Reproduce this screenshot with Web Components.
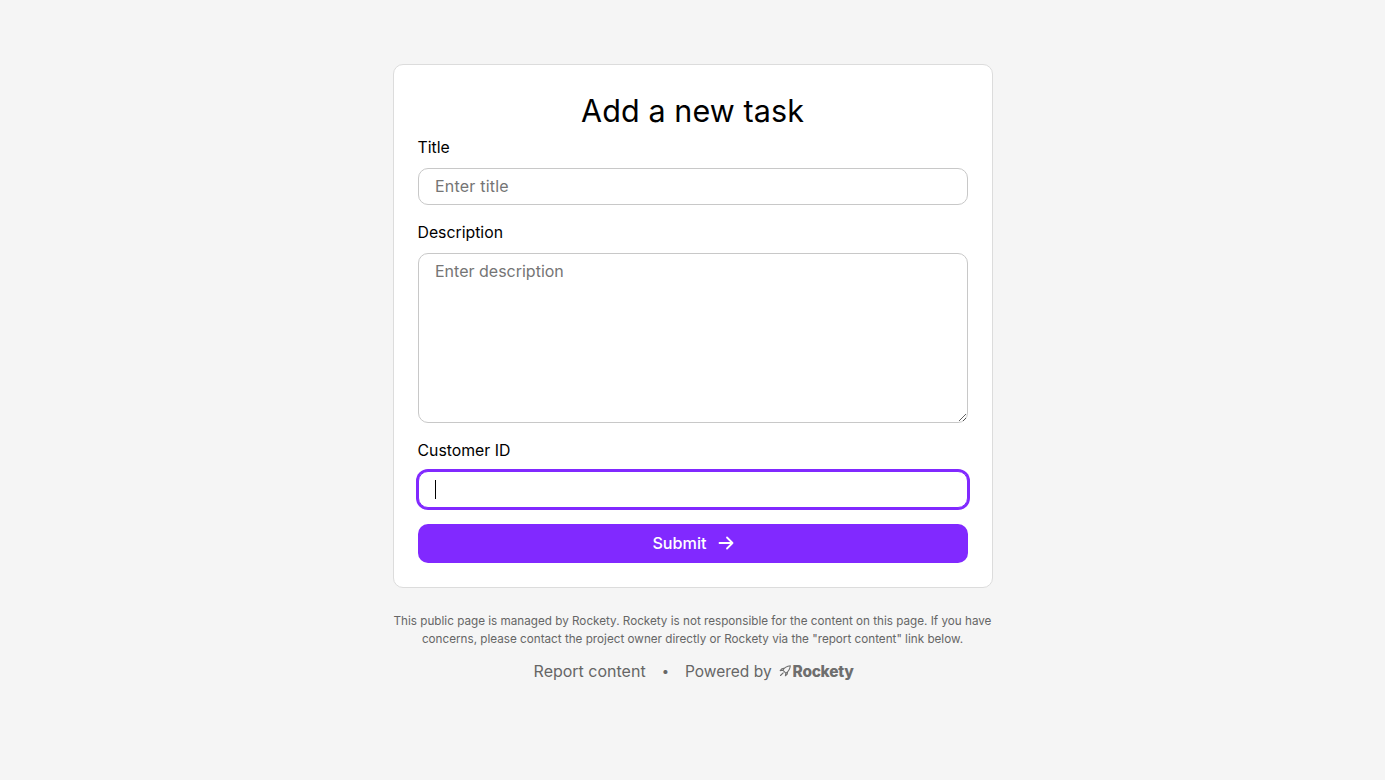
<!DOCTYPE html>
<html><head><meta charset="utf-8"><title>Add a new task</title>
<style>html,body{margin:0;background:#f5f5f5;height:100%}body{font-family:Inter,"Liberation Sans",sans-serif}</style>
</head><body>
<task-page>
<task-card>
<form-field label="Title" placeholder="Enter title"></form-field>
<form-field label="Description" placeholder="Enter description" multiline></form-field>
<form-field label="Customer ID" focused></form-field>
<submit-button>Submit</submit-button>
</task-card>
<page-footer></page-footer>
</task-page>
<script>
const F='Inter,"Liberation Sans",sans-serif';
function def(name,html,init){customElements.define(name,class extends HTMLElement{connectedCallback(){if(this.shadowRoot)return;const r=this.attachShadow({mode:'open'});r.innerHTML=html;init&&init(this,r);}});}
def('task-page',`<style>:host{display:flex;flex-direction:column;align-items:center;padding-top:64px;font-family:${F}}</style><slot></slot>`);
def('task-card',`<style>:host{display:flex;flex-direction:column;box-sizing:border-box;width:600px;height:524px;background:#fff;border:1px solid #dcdcdc;border-radius:10px;padding:24px}
h1{margin:0;font-size:30.5px;font-weight:400;line-height:43px;text-align:center;color:#000;height:47px;letter-spacing:.1px}
.f{display:flex;flex-direction:column;gap:16px}</style><h1>Add a new task</h1><div class="f"><slot></slot></div>`);
def('form-field',`<style>:host{display:block}
label{display:block;font-size:15.8px;line-height:24px;height:22px;margin-bottom:10px;color:#000;margin-top:0}
.w{position:relative;display:block;line-height:0}
input,textarea{display:block;box-sizing:border-box;width:550px;height:37px;border:1px solid #c8c8c8;border-radius:10px;padding:0 16px 2px 16.5px;font:16px ${F};background:#fff;outline:0;margin:0;color:#000}
input::placeholder{letter-spacing:.2px}
textarea{height:170px;padding:5px 16px 5px 16.5px;line-height:24px;resize:vertical}
::placeholder{color:#757575;opacity:1}
input.focus{border-color:#8129ff;box-shadow:0 0 0 2px #8129ff}
.caret{position:absolute;left:17px;top:9px;width:1px;height:19px;background:#000}
</style><label></label><span class="w"></span>`,(h,r)=>{
r.querySelector('label').textContent=h.getAttribute('label');
const w=r.querySelector('.w');const el=document.createElement(h.hasAttribute('multiline')?'textarea':'input');
if(h.getAttribute('placeholder'))el.placeholder=h.getAttribute('placeholder');
el.setAttribute('aria-label',h.getAttribute('label'));w.append(el);
if(h.hasAttribute('focused')){el.className='focus';const c=document.createElement('span');c.className='caret';w.append(c);}
});
def('submit-button',`<style>:host{display:block}
button{display:flex;align-items:center;justify-content:center;gap:12px;width:100%;height:39px;border:0;border-radius:10px;background:#8129ff;color:#fff;font:500 16.2px ${F};padding:0 0 0 1px}
span{display:block;margin-top:-2px}
svg{display:block;margin-top:-1px;margin-left:-1px}</style><button type="button"><span><slot></slot></span><svg width="16" height="16" viewBox="0 0 16 16" fill="none" stroke="#fff" stroke-width="1.8" stroke-linecap="round" stroke-linejoin="round"><path d="M1.5 8h13M9 2.5 14.5 8 9 13.5"/></svg></button>`);
def('page-footer',`<style>:host{display:flex;flex-direction:column;align-items:center;width:600px;margin-top:24px;color:#666}
p{margin:0;font-size:11.7px;line-height:18px;text-align:center;width:600px}
.l{display:flex;align-items:center;height:24px;margin-top:11px;padding-left:2px;font-size:16px;color:#666}
.d{margin:0 16px;font-size:13px}
.p{font-size:15.5px}
.r{display:inline-flex;align-items:center;margin-left:7px;font-weight:800;font-size:15.5px;letter-spacing:-.3px;gap:2px;color:#6e6e6e}
svg{display:block}</style>
<p>This public page is managed by Rockety. Rockety is not responsible for the content on this page. If you have concerns, please contact the project owner directly or Rockety via the "report content" link below.</p>
<div class="l"><span>Report content</span><span class="d">•</span><span class="p">Powered by</span><span class="r"><svg width="12" height="12" viewBox="0 0 12 12" fill="none" stroke="#6e6e6e" stroke-width="1.1" stroke-linejoin="round" stroke-linecap="round"><path d="M11.3.7C8 1 5.5 2.5 3.8 5.2L6.8 8.2C9.5 6.5 11 4 11.3.7ZM3.8 5.2 1.2 5.6 2.8 3.8 5 3.4M6.8 8.2 6.4 10.8 8.2 9.2 8.6 7M4.2 7.8 1.5 10.5"/></svg>Rockety</span></div>`);
</script>
</body></html>
